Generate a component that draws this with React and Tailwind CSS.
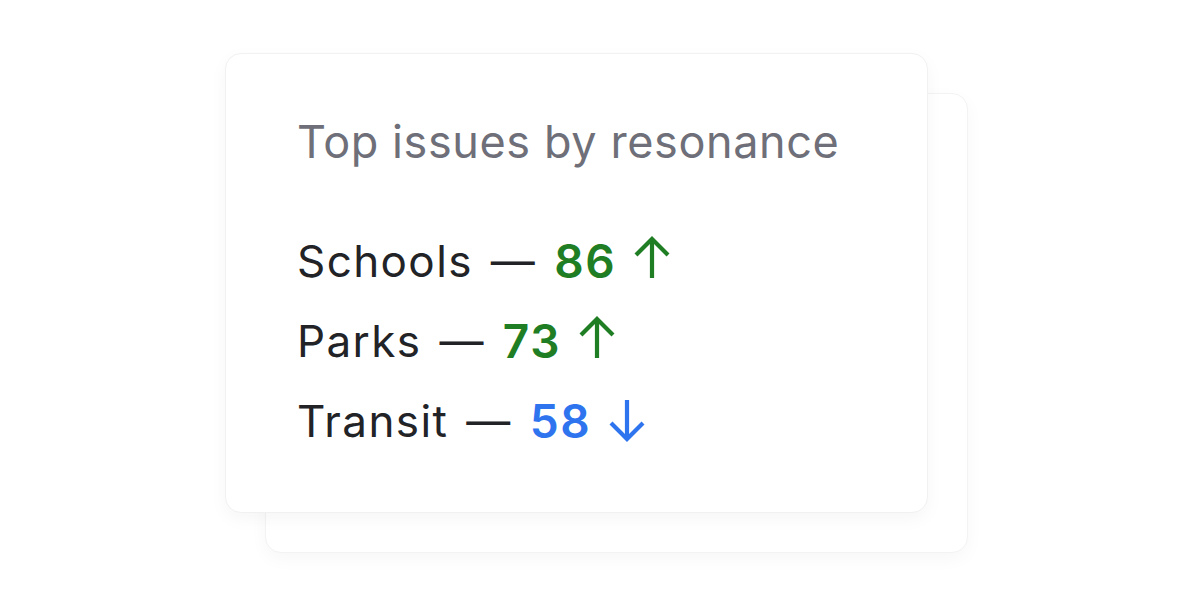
const rows = [
  { label: "Schools", value: "86", dir: "up" },
  { label: "Parks", value: "73", dir: "up" },
  { label: "Transit", value: "58", dir: "down" },
];

function Arrow({ dir, className }) {
  return (
    <svg viewBox="0 0 36 42" className={className} fill="none" stroke="currentColor" strokeWidth="4.2" strokeLinecap="butt" strokeLinejoin="miter">
      {dir === "up" ? (
        <>
          <path d="M18 3 V42" />
          <path d="M2 19 L18 3 L34 19" />
        </>
      ) : (
        <>
          <path d="M18 0 V39" />
          <path d="M2 23 L18 39 L34 23" />
        </>
      )}
    </svg>
  );
}

export default function App() {
  return (
    <div className="w-[1192px] h-[608px] bg-white overflow-hidden font-['Inter',sans-serif]">
      <div className="relative ml-[225px] mt-[53px] w-[703px] h-[460px]">
        {/* back card */}
        <div className="absolute left-[40px] top-[40px] w-[703px] h-[460px] rounded-[16px] bg-white border border-[#f3f3f4] shadow-[0_6px_18px_rgba(0,0,0,0.035)]" />
        {/* front card */}
        <div className="relative w-full h-full rounded-[16px] bg-white border border-[#f1f1f2] shadow-[0_6px_18px_rgba(0,0,0,0.04)] pl-[71px] pt-[60px]">
          <h2 className="text-[45px] leading-[56px] text-[#6e6f78] tracking-[0.6px]">
            Top issues by resonance
          </h2>
          <ul className="mt-[63px] flex flex-col gap-[24px]">
            {rows.map((r) => {
              const up = r.dir === "up";
              const color = up ? "text-[#1f7d24]" : "text-[#2f74ef]";
              return (
                <li key={r.label} className="flex items-center h-[56px] text-[44px] text-[#222326] tracking-[1.4px]">
                  <span>{r.label}</span>
                  <span className="mx-[18px]">—</span>
                  <span className={`text-[46px] font-semibold tracking-[1.6px] ${color}`}>{r.value}</span>
                  <Arrow dir={r.dir} className={`ml-[18px] w-[36px] h-[42px] ${up ? "mb-[8px]" : ""} ${color}`} />
                </li>
              );
            })}
          </ul>
        </div>
      </div>
    </div>
  );
}
